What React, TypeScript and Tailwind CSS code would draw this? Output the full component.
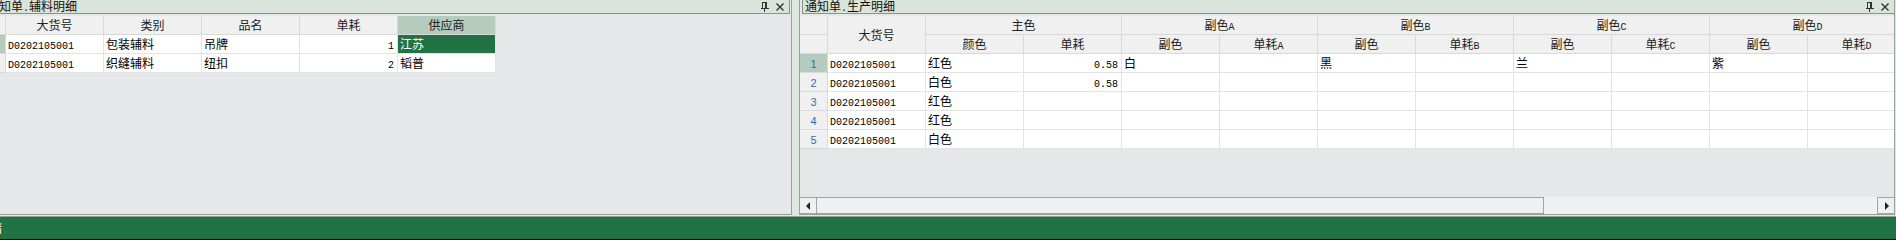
import React from "react";

const CJK = "font-['Noto_Sans_CJK_SC',sans-serif] text-[12px]";
const MONO = "font-['Liberation_Mono',monospace] text-[10px]";

function L({ children }: { children: React.ReactNode }) {
  return <span className={MONO}>{children}</span>;
}

function Pin() {
  return (
    <svg width="8" height="10" viewBox="0 0 8 10" shapeRendering="crispEdges" className="block">
      <rect x="1" y="0" width="5" height="1" fill="#333" />
      <rect x="1" y="0" width="1" height="6" fill="#333" />
      <rect x="4" y="0" width="2" height="6" fill="#333" />
      <rect x="0" y="6" width="8" height="1" fill="#333" />
      <rect x="3" y="7" width="1" height="3" fill="#333" />
    </svg>
  );
}

function Close() {
  return (
    <svg width="8" height="8" viewBox="0 0 8 8" className="block">
      <path d="M0.5 0.5 L7.5 7.5 M7.5 0.5 L0.5 7.5" stroke="#333" strokeWidth="1.4" />
    </svg>
  );
}

function TitleIcons() {
  return (
    <div className="ml-auto flex items-center gap-[7px] pr-[5px] pt-[1px]">
      <Pin />
      <Close />
    </div>
  );
}

type CellProps = {
  children?: React.ReactNode;
  w?: string;
  h?: string;
  cls?: string;
};

function HCell({ children, w = "w-[98px]", h = "h-[19px] leading-[18px]", cls = "bg-[#f0f0f0] text-[#222]" }: CellProps) {
  return (
    <div className={`${w} ${h} ${cls} shrink-0 border-r border-b border-[#d9d9d9] text-center overflow-hidden`}>
      {children}
    </div>
  );
}

function DCell({ children, right, cls = "bg-white text-black" }: { children?: React.ReactNode; right?: boolean; cls?: string }) {
  return (
    <div
      className={`w-[98px] h-[19px] leading-[18px] shrink-0 border-r border-b border-[#e3e3e3] overflow-hidden whitespace-nowrap ${
        right ? "text-right pr-[3px]" : "pl-[2px]"
      } ${cls}`}
    >
      {children}
    </div>
  );
}

function LeftPanel() {
  const rows = [
    ["D0202105001", "包装辅料", "吊牌", "1", "江苏"],
    ["D0202105001", "织缝辅料", "纽扣", "2", "韬普"],
  ];
  return (
    <div className="w-[792px] h-[215px] shrink-0 flex flex-col border-r border-b border-[#8ea993] bg-[#e5e7e9] overflow-hidden">
      <div className="h-[14px] mr-[1px] shrink-0 flex bg-[#d9e4da] border-b border-r border-[#7c9a84] overflow-hidden">
        <div className={`${CJK} leading-[12px] ml-[-13px] text-[#111] whitespace-nowrap`}>
          通知单<L>.</L>辅料明细
        </div>
        <TitleIcons />
      </div>
      <div className={`${CJK} mt-[2px] flex flex-col`}>
        <div className="flex">
          <HCell w="w-[6px]" />
          {["大货号", "类别", "品名", "单耗"].map((c) => (
            <HCell key={c}>{c}</HCell>
          ))}
          <HCell cls="bg-[#b4cbbd] text-[#222]">供应商</HCell>
        </div>
        {rows.map((r, i) => (
          <div className="flex" key={i}>
            <HCell w="w-[6px]" cls={i === 0 ? "bg-[#b4cbbd]" : "bg-[#f0f0f0]"} />
            <DCell>
              <L>{r[0]}</L>
            </DCell>
            <DCell>{r[1]}</DCell>
            <DCell>{r[2]}</DCell>
            <DCell right>
              <L>{r[3]}</L>
            </DCell>
            <DCell cls={i === 0 ? "bg-[#217346] text-white" : "bg-white text-black"}>{r[4]}</DCell>
          </div>
        ))}
      </div>
    </div>
  );
}

function Arrow({ dir }: { dir: "l" | "r" }) {
  return (
    <svg width="5" height="8" viewBox="0 0 5 8" className="block">
      {dir === "l" ? <path d="M4 0 L4 8 L0 4 Z" fill="#222" /> : <path d="M1 0 L1 8 L5 4 Z" fill="#222" />}
    </svg>
  );
}

function RightPanel() {
  const groups = [
    { name: "主色", sub: [<>颜色</>, <>单耗</>] },
    { name: <>副色<L>A</L></>, sub: [<>副色</>, <>单耗<L>A</L></>] },
    { name: <>副色<L>B</L></>, sub: [<>副色</>, <>单耗<L>B</L></>] },
    { name: <>副色<L>C</L></>, sub: [<>副色</>, <>单耗<L>C</L></>] },
    { name: <>副色<L>D</L></>, sub: [<>副色</>, <>单耗<L>D</L></>] },
  ];
  const rows: string[][] = [
    ["D0202105001", "红色", "0.58", "白", "", "黑", "", "兰", "", "紫", ""],
    ["D0202105001", "白色", "0.58", "", "", "", "", "", "", "", ""],
    ["D0202105001", "红色", "", "", "", "", "", "", "", "", ""],
    ["D0202105001", "红色", "", "", "", "", "", "", "", "", ""],
    ["D0202105001", "白色", "", "", "", "", "", "", "", "", ""],
  ];
  return (
    <div className="w-[1096px] h-[215px] shrink-0 flex flex-col border-l border-r border-b border-[#8ea993] bg-[#e5e7e9] overflow-hidden">
      <div className="h-[14px] ml-[2px] shrink-0 flex bg-[#d9e4da] border-l border-b border-[#7c9a84] overflow-hidden">
        <div className={`${CJK} leading-[12px] pl-[2px] text-[#111] whitespace-nowrap`}>
          通知单<L>.</L>生产明细
        </div>
        <TitleIcons />
      </div>
      <div className={`${CJK} mt-[2px] flex flex-col overflow-hidden`}>
        <div className="flex">
          <div className="flex flex-col shrink-0">
            <HCell w="w-[28px]" />
            <HCell w="w-[28px]" />
          </div>
          <HCell h="h-[38px] leading-[37px]">大货号</HCell>
          {groups.map((g, i) => (
            <div className="flex flex-col shrink-0" key={i}>
              <HCell w="w-[196px]">{g.name}</HCell>
              <div className="flex">
                <HCell>{g.sub[0]}</HCell>
                <HCell>{g.sub[1]}</HCell>
              </div>
            </div>
          ))}
        </div>
        {rows.map((r, i) => (
          <div className="flex" key={i}>
            <HCell
              w="w-[28px]"
              cls={`${i === 0 ? "bg-[#b4cbbd]" : "bg-[#f0f0f0]"} text-[#2f6fb3]`}
            >
              <span className="font-['Liberation_Sans',sans-serif] text-[11px]">{i + 1}</span>
            </HCell>
            {r.map((v, j) => {
              const num = j === 2;
              const latin = j === 0 || num;
              return (
                <DCell key={j} right={num}>
                  {latin ? <L>{v}</L> : v}
                </DCell>
              );
            })}
          </div>
        ))}
      </div>
      <div className="mt-auto h-[17px] shrink-0 flex bg-[#f0f0f0]">
        <div className="w-[17px] h-[17px] shrink-0 border-t border-b border-r border-[#a3a3a3] flex items-center justify-center">
          <Arrow dir="l" />
        </div>
        <div className="w-[727px] h-[17px] shrink-0 border-t border-b border-r border-[#a3a3a3] bg-[#f0f0f0]" />
        <div className="flex-1" />
        <div className="w-[17px] h-[17px] shrink-0 border-t border-b border-l border-[#a3a3a3] flex items-center justify-center">
          <Arrow dir="r" />
        </div>
      </div>
    </div>
  );
}

export default function App() {
  return (
    <div className="w-[1896px] h-[240px] flex flex-col bg-[#e5e7e9] overflow-hidden">
      <div className="flex h-[215px] shrink-0">
        <LeftPanel />
        <div className="w-[7px] shrink-0 bg-[#dfe8df]" />
        <RightPanel />
        <div className="w-[1px] shrink-0 bg-[#dfe8df]" />
      </div>
      <div className="h-[1px] shrink-0 bg-[#e5e7e9]" />
      <div className="h-[1px] shrink-0 bg-[#9a9a9a]" />
      <div className="h-[22px] shrink-0 bg-[#217346] overflow-hidden flex items-center">
        <span className={`${CJK} text-white ml-[-10px] leading-[14px]`}>绪</span>
      </div>
      <div className="h-[1px] shrink-0 bg-black" />
    </div>
  );
}
